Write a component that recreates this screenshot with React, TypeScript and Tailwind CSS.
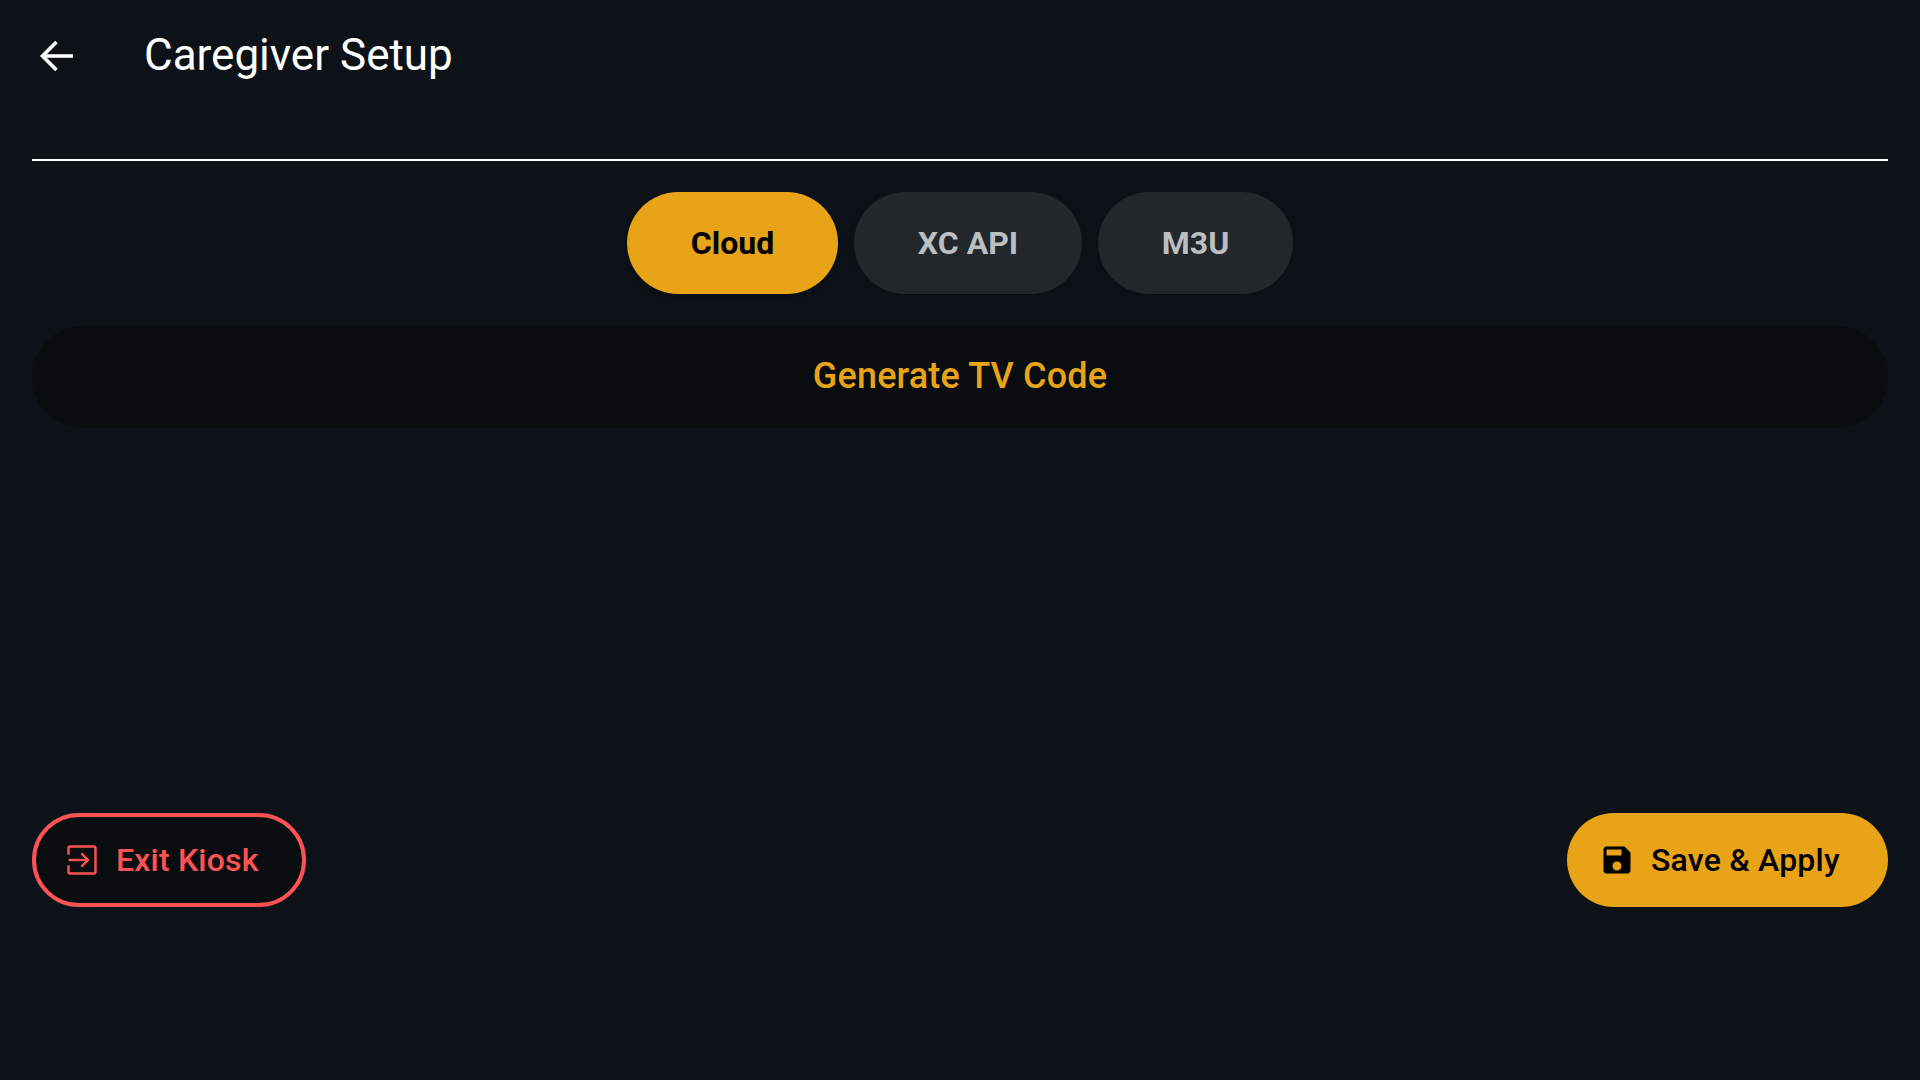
export default function App() {
  const font = { fontFamily: "Roboto, sans-serif" };
  return (
    <div className="flex h-screen w-full flex-col bg-[#0d1219] px-8 pb-[173px] font-['Roboto',sans-serif] text-white" style={font}>
      <header className="flex h-[159px] shrink-0 items-start pt-[27px]">
        <div className="flex h-[58px] items-center pl-[7px]">
          <svg width="34" height="32" viewBox="0 0 34 32" fill="none" stroke="#ffffff" strokeWidth="3.6" aria-hidden="true">
            <path d="M34 16H3" />
            <path d="M17.500 2 3.500 16l14 14" />
          </svg>
        </div>
        <h1 className="ml-[71px] text-[44px] leading-[56px] font-normal text-white">Caregiver Setup</h1>
      </header>
      <div className="h-[2px] shrink-0 bg-white" />
      <div className="mt-[31px] flex shrink-0 justify-center gap-4">
        <button className="h-[102px] w-[211px] rounded-full bg-[#e8a317] text-[32px] font-bold text-black shadow-[0_4px_20px_rgba(0,0,0,0.25)]">Cloud</button>
        <button className="h-[102px] w-[228px] rounded-full bg-[#22272b] text-[32px] font-bold text-[#bcbec0] shadow-[0_2px_8px_rgba(0,0,0,0.2)]">XC API</button>
        <button className="h-[102px] w-[195px] rounded-full bg-[#22272b] text-[32px] font-bold text-[#bcbec0] shadow-[0_2px_8px_rgba(0,0,0,0.2)]">M3U</button>
      </div>
      <button className="mt-[32px] h-[102px] shrink-0 rounded-full bg-[#090d10] pb-[2px] text-[36px] font-medium tracking-[0.15px] text-[#e8a317]">Generate TV Code</button>
      <div className="mt-auto flex h-[94px] shrink-0 items-stretch justify-between">
        <button className="flex w-[274px] items-center rounded-full border-4 border-[#ff5252] bg-[#090d10] pl-[28px] text-[32px] font-medium tracking-[0.2px] text-[#ff5252]">
          <svg width="36" height="36" viewBox="0 0 24 24" fill="none" stroke="#ff5252" strokeWidth="1.6" aria-hidden="true">
            <path d="M3 8.500V4.200C3 3.500 3.500 3 4.200 3h15.600c.7 0 1.200.5 1.200 1.200v15.600c0 .7-.5 1.200-1.200 1.200H4.200C3.500 21 3 20.500 3 19.800V15.500" />
            <path d="M3 12h12.500" />
            <path d="m11.500 7.500 4.500 4.500-4.500 4.500" />
          </svg>
          <span className="ml-[16px]">Exit Kiosk</span>
        </button>
        <button className="flex w-[321px] items-center rounded-full bg-[#e8a317] pl-[32px] text-[32px] font-medium tracking-[0.2px] text-black">
          <svg width="36" height="36" viewBox="0 0 24 24" fill="#000000" aria-hidden="true">
            <path d="M17 3H5c-1.110 0-2 .9-2 2v14c0 1.100.89 2 2 2h14c1.100 0 2-.9 2-2V7l-4-4zm-5 16c-1.660 0-3-1.340-3-3s1.340-3 3-3 3 1.340 3 3-1.340 3-3 3zm3-10H5V5h10v4z" />
          </svg>
          <span className="ml-4">Save &amp; Apply</span>
        </button>
      </div>
    </div>
  );
}
